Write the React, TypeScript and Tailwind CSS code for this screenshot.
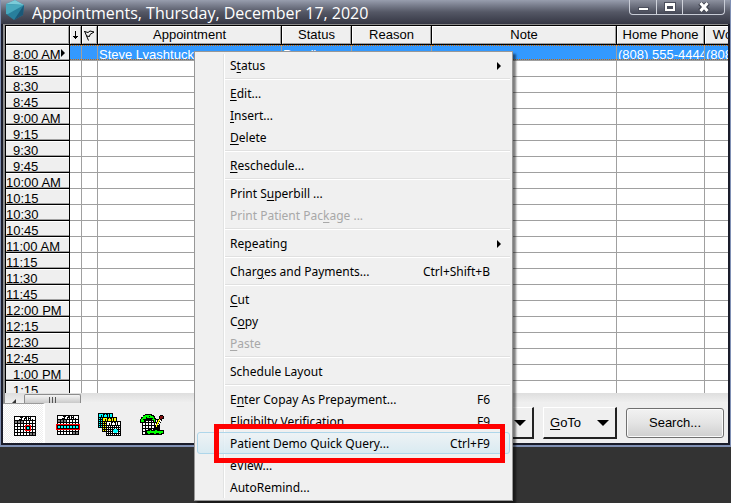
import React from "react";

type MenuItem = {
  // "&" marks the access key, as in a Windows resource file
  label: string;
  shortcut?: string;
  submenu?: boolean;
  disabled?: boolean;
  active?: boolean;
};

const menuGroups: MenuItem[][] = [
  [{ label: "S&tatus", submenu: true }],
  [{ label: "&Edit..." }, { label: "&Insert..." }, { label: "&Delete" }],
  [{ label: "&Reschedule..." }],
  [{ label: "Print S&uperbill ..." }, { label: "Print Patient Pac&kage ...", disabled: true }],
  [{ label: "Re&peating", submenu: true }],
  [{ label: "Char&ges and Payments...", shortcut: "Ctrl+Shift+B" }],
  [{ label: "&Cut" }, { label: "C&opy" }, { label: "&Paste", disabled: true }],
  [{ label: "Schedule Layout" }],
  [
    { label: "E&nter Copay As Prepayment...", shortcut: "F6" },
    { label: "Eligibilty Verification", shortcut: "F9" },
    { label: "Patient Demo Quick Query...", shortcut: "Ctrl+F9", active: true },
    { label: "eView..." },
    { label: "AutoRemind..." },
  ],
];

const times = [
  "8:00 AM", "8:15", "8:30", "8:45",
  "9:00 AM", "9:15", "9:30", "9:45",
  "10:00 AM", "10:15", "10:30", "10:45",
  "11:00 AM", "11:15", "11:30", "11:45",
  "12:00 PM", "12:15", "12:30", "12:45",
  "1:00 PM", "1:15",
];

const columns = ["Appointment", "Status", "Reason", "Note", "Home Phone", "Work Phone"];

const appointments: Record<string, string[]> = {
  "8:00 AM": ["", "", "Steve Lyashtuck", "Pending", "", "", "(808) 555-4444", "(808) 555-1212"],
};

export default function App() {
  return (
    <div className="relative min-h-screen overflow-hidden bg-[#333333] font-['Liberation_Sans',Arial,sans-serif] text-[13px] text-black">
      <main className="border-x border-b-2 border-[#8090b4] bg-[#1a1c2a]">
        <TitleBar />
        <div className="mr-0.5 ml-0.5 border-b-2 border-[#1a1c2a] bg-[#efefef]">
          <div className="border-t border-l-2 border-[#8c8c8c]">
            <ScheduleGrid />
            <div className="flex h-2.5 items-end overflow-hidden bg-gradient-to-b from-[#dedede] to-[#f0f0f0] pl-[7px]">
              <svg viewBox="0 0 4 4" className="mr-2 h-1 w-1" aria-hidden="true">
                <path d="M4 0V4H0Z" fill="#333" />
              </svg>
              <div className="flex h-[9px] w-[57px] items-end justify-center gap-0.5 rounded-t-xs border border-b-0 border-[#8c8c8c] bg-gradient-to-b from-[#f4f4f4] to-[#c9c9c9]">
                <i className="h-1.5 w-px bg-[#555]" />
                <i className="h-1.5 w-px bg-[#555]" />
                <i className="h-1.5 w-px bg-[#555]" />
              </div>
            </div>
          </div>
          <Toolbar />
        </div>
      </main>

      <ContextMenu />
      <div className="pointer-events-none absolute top-[424px] left-[214px] h-[39px] w-[291px] border-5 border-[#ff0000]" />
    </div>
  );
}

function TitleBar() {
  return (
    <header className="flex h-6 items-start bg-gradient-to-b from-[#989eae] via-[#555866] to-[#353744] pl-[5px]">
      <svg viewBox="0 0 18 20" className="h-5 w-[18px] shrink-0">
        <path d="M9 0 18 5 17 15 8 20 0 14 0 4Z" fill="#287f9c" />
        <path d="M9 0 18 5 0 4Z" fill="#7ccbd8" />
        <path d="M0 4 18 5 2 14 0 14Z" fill="#49a8bd" />
        <path d="M18 5 17 15 8 20Z" fill="#1b5878" />
      </svg>
      <h1 className="ml-2 flex-1 truncate font-['Open_Sans','Noto_Sans',sans-serif] text-[16px] leading-[26px] text-white">
        Appointments, Thursday, December 17, 2020
      </h1>
      <div className="mr-[5px] flex h-[15px] shrink-0 divide-x divide-[#d0d3dc] rounded-b-[4px] border border-t-0 border-[#c8ccd6] bg-gradient-to-b from-[#8d919f] to-[#454856]">
        <button type="button" aria-label="Minimize" className="flex w-[27px] items-center justify-center">
          <svg viewBox="0 0 11 10" className="h-2.5 w-[11px]">
            <rect x="0.5" y="5.5" width="10" height="3" fill="#fff" stroke="#4b4e5c" />
          </svg>
        </button>
        <button type="button" aria-label="Maximize" className="flex w-[26px] items-center justify-center">
          <svg viewBox="0 0 12 10" className="h-2.5 w-3">
            <rect x="0.5" y="0.5" width="11" height="9" fill="#fff" stroke="#4b4e5c" />
            <rect x="3" y="4" width="6" height="3" fill="#4b4e5c" />
          </svg>
        </button>
        <button type="button" aria-label="Close" className="flex w-[41px] items-center justify-center">
          <svg viewBox="0 0 12 10" className="h-2.5 w-3">
            <path d="M2 1 10 9M10 1 2 9" stroke="#3c3f4c" strokeWidth="5" />
            <path d="M2.500 1 9.500 9M9.500 1 2.500 9" stroke="#fff" strokeWidth="3" />
          </svg>
        </button>
      </div>
    </header>
  );
}

function ScheduleGrid() {
  return (
    <div className="h-[368px] overflow-hidden border-t border-l border-black bg-white">
      <table className="w-[calc(100%+65px)] table-fixed border-separate border-spacing-0">
        <colgroup>
          <col className="w-16" />
          <col className="w-3" />
          <col className="w-4" />
          <col className="w-[184px]" />
          <col className="w-[70px]" />
          <col className="w-20" />
          <col />
          <col className="w-[88px]" />
          <col className="w-[88px]" />
        </colgroup>
        <thead>
          <tr>
            <HeadCell />
            <HeadCell>
              <svg viewBox="0 0 5 9" className="h-[9px] w-[5px] shrink-0" shapeRendering="crispEdges" aria-label="Order">
                <path d="M2 0h1v5h2v1h-1v1h-1v1h-1v-1h-1v-1h-1v-1h2z" />
              </svg>
            </HeadCell>
            <HeadCell>
              <svg viewBox="0 0 11 11" className="h-[11px] w-[11px] shrink-0" fill="none" stroke="#000" aria-label="Flag">
                <path d="M0.500 1 4.500 10.500M0.500 1.500 4 2.500 6 1 10 2 6 4.500 5.500 6.500 2.500 6" />
              </svg>
            </HeadCell>
            {columns.map((name) => (
              <HeadCell key={name}>{name}</HeadCell>
            ))}
          </tr>
        </thead>
        <tbody>
          {times.map((time) => {
            const cells = appointments[time];
            const oneDigit = time.indexOf(":") === 1;
            return (
              <tr key={time}>
                <th scope="row" className="border-r border-b border-black bg-[#efefef] p-0 text-left font-normal">
                  <div
                    className={`flex h-[15px] overflow-hidden border-t border-b border-t-white border-b-[#a0a0a0] leading-[17px] whitespace-nowrap ${
                      oneDigit ? "pl-[7px]" : ""
                    }`}
                  >
                    {time}
                    {cells ? (
                      <svg viewBox="0 0 4 8" className="mt-[3px] h-2 w-1 shrink-0">
                        <path d="M0 0 4 4 0 8Z" />
                      </svg>
                    ) : null}
                  </div>
                </th>
                {Array.from({ length: 8 }, (_, i) => (
                  <td
                    key={i}
                    className={`border-r border-b p-0 ${
                      cells
                        ? "border-r-[#a0a0a0] border-b-[#a0a0a0] bg-[#3399ff] text-white"
                        : "border-[#a0a0a0]"
                    }`}
                  >
                    <div
                      className={`h-[15px] overflow-hidden pl-px whitespace-nowrap ${
                        cells ? "border-y border-dotted border-[#cc6600] leading-[17px]" : ""
                      }`}
                    >
                      {cells?.[i]}
                    </div>
                  </td>
                ))}
              </tr>
            );
          })}
        </tbody>
      </table>
    </div>
  );
}

function HeadCell({ children }: { children?: React.ReactNode }) {
  return (
    <th scope="col" className="border-r border-b border-black bg-[#efefef] p-0 font-normal">
      <div className="flex h-[18px] items-center justify-center overflow-hidden border border-t-white border-r-[#a0a0a0] border-b-[#a0a0a0] border-l-white whitespace-nowrap">
        {children}
      </div>
    </th>
  );
}

function Toolbar() {
  return (
    <div className="flex h-10 items-center pr-1">
      <div className="flex h-full items-center">
        <button
          type="button"
          aria-label="Day view"
          className="flex h-full w-[42px] items-center justify-center border-t border-r-2 border-t-[#9a9a9a] border-r-white bg-[#f6f6f6] bg-[repeating-conic-gradient(#fff_0_25%,#efefef_0_50%)] bg-[size:2px_2px] pt-[5px] pl-1"
        >
          <svg viewBox="0 0 22 20" className="h-5 w-[22px]" shapeRendering="crispEdges">
            <MonthPage />
            <rect x="11" y="9" width="6" height="6" fill="#ff0000" />
            <rect x="12" y="10" width="4" height="4" fill="#000" />
            <rect x="13" y="11" width="2" height="2" fill="#00ffff" />
          </svg>
        </button>
        <button type="button" aria-label="Week view" className="flex h-full w-[43px] items-center justify-center pt-1 pl-[3px]">
          <svg viewBox="-1 0 24 20" className="h-5 w-6" shapeRendering="crispEdges">
            <MonthPage />
            <rect x="-1" y="9" width="24" height="6" fill="#ff0000" />
            <rect x="0" y="10" width="22" height="4" fill="#000" />
            {range(7).map((c) => (
              <rect key={c} x={1 + c * 3} y="11" width="2" height="2" fill="#00ffff" />
            ))}
          </svg>
        </button>
        <button type="button" aria-label="Multiple months" className="flex h-full w-10 items-center justify-center pt-[3px] pl-[3px]">
          <svg viewBox="0 0 23 23" className="h-[23px] w-[23px]" shapeRendering="crispEdges">
            <SmallPage x={0} y={0} color="#00ffff" />
            <SmallPage x={4} y={4} color="#ffff00" />
            <SmallPage x={8} y={8} color="#ffffff" />
            <path d="M16 16h3v1h1v2h-1v1h-3v-1h-1v-2h1z" fill="#00ffff" />
          </svg>
        </button>
        <button type="button" aria-label="Edit schedule" className="flex h-full w-[46px] items-center justify-center pt-1 pl-0.5">
          <ScheduleEditIcon />
        </button>
      </div>

      <div className="ml-auto flex items-center gap-[9px]">
        <DropButton label="&View" width="w-[90px]" />
        <DropButton label="&GoTo" width="w-[74px]" />
        <button
          type="button"
          className="h-[30px] w-[98px] rounded-[3px] border border-[#707070] bg-gradient-to-b from-[#f2f2f2] via-[#e4e4e4] to-[#cfcfcf] text-center inset-shadow-[0_0_0_1px_#fafafa]"
        >
          Search...
        </button>
      </div>
    </div>
  );
}

function DropButton({ label, width }: { label: string; width: string }) {
  return (
    <button
      type="button"
      className={`flex h-8 items-center justify-between border-t border-r-2 border-b-2 border-l border-t-white border-r-[#222] border-b-[#222] border-l-white bg-[#efefef] pr-1.5 pl-1.5 ${width}`}
    >
      <AccessLabel text={label} />
      <svg viewBox="0 0 12 6" className="h-1.5 w-3">
        <path d="M0 0H12L6 6Z" />
      </svg>
    </button>
  );
}

function ContextMenu() {
  return (
    <div
      role="menu"
      className="absolute top-[51px] left-[194px] w-[319px] border border-[#979797] bg-[#f0f0f0] p-0.5 font-['Noto_Sans','Open_Sans',sans-serif] text-[12px] shadow-[3px_3px_2px_rgba(0,0,0,0.5)]"
    >
      <div className="bg-[linear-gradient(#e2e3e3,#e2e3e3),linear-gradient(#fff,#fff)] bg-[size:1px_100%] bg-[position:26px_0,27px_0] bg-no-repeat">
        {menuGroups.map((group, g) => (
          <React.Fragment key={g}>
            {g > 0 ? (
              <div role="separator" className="ml-7 flex h-1.5 items-center">
                <div className="h-0.5 flex-1 border-t border-b border-t-[#e0e0e0] border-b-white" />
              </div>
            ) : null}
            {group.map((item) => (
              <button
                key={item.label}
                type="button"
                role="menuitem"
                disabled={item.disabled}
                className={`flex h-[22px] w-full items-center rounded-[3px] border pt-0.5 pr-2 pl-8 text-left ${
                  item.active
                    ? "border-[#aed6ea] bg-gradient-to-b from-[#edf3f6]/80 to-[#d4e9f2]/80"
                    : "border-transparent"
                } ${item.disabled ? "text-[#a8a8a8]" : "text-black"}`}
              >
                <span className="flex-1 whitespace-nowrap">
                  <AccessLabel text={item.label} />
                </span>
                {item.shortcut ? <span className="mr-[11px]">{item.shortcut}</span> : null}
                {item.submenu ? (
                  <svg viewBox="0 0 4 8" className="h-2 w-1">
                    <path d="M0 0 4 4 0 8Z" />
                  </svg>
                ) : null}
              </button>
            ))}
          </React.Fragment>
        ))}
      </div>
    </div>
  );
}

function AccessLabel({ text }: { text: string }) {
  const at = text.indexOf("&");
  if (at < 0) return <span>{text}</span>;
  return (
    <span>
      {text.slice(0, at)}
      <u className="underline-offset-2">{text[at + 1]}</u>
      {text.slice(at + 2)}
    </span>
  );
}

function range(n: number) {
  return Array.from({ length: n }, (_, i) => i);
}

// 22x20 month sheet: a white heading strip over a 7x5 grid of day cells
function MonthPage() {
  return (
    <>
      <rect width="22" height="20" fill="#000" />
      <rect x="1" y="1" width="20" height="3" fill="#fff" />
      <path d="M6 1h3v1h-1v2h-3v-1h2v-1h-1zM10 2h1v-1h2v3h-1v-1h-1v1h-1zM14 1h1v1h1v-1h1v3h-1v-1h-1v1h-1zM18 3h1v1h-1z" fill="#000" />
      {range(5).map((r) =>
        range(7).map((c) => {
          const outside = (r === 0 && c < 3) || (r === 4 && c > 4);
          return (
            <rect key={`${r}-${c}`} x={1 + c * 3} y={5 + r * 3} width="2" height="2" fill={outside ? "#808080" : "#fff"} />
          );
        })
      )}
    </>
  );
}

function SmallPage({ x, y, color }: { x: number; y: number; color: string }) {
  return (
    <>
      <rect x={x} y={y} width="15" height="15" fill="#000" />
      <rect x={x + 1} y={y + 1} width="13" height="3" fill={color} />
      <path d={`M${x + 3} ${y + 2}h1v2h-1zM${x + 5} ${y + 1}h2v1h-1v2h-1zM${x + 8} ${y + 1}h2v3h-1v-2h-1zM${x + 11} ${y + 1}h1v3h-1z`} fill="#000" />
      {range(5).map((r) =>
        range(7).map((c) => (
          <rect key={`${r}-${c}`} x={x + 1 + c * 2} y={y + 5 + r * 2} width="1" height="1" fill={color} />
        ))
      )}
    </>
  );
}

function ScheduleEditIcon() {
  return (
    <svg viewBox="0 0 24 22" className="h-[22px] w-6" shapeRendering="crispEdges">
      <rect x="2" y="5" width="18" height="16" fill="#000" />
      {range(5).map((r) =>
        range(5).map((c) => (
          <rect key={`${r}-${c}`} x={3 + c * 3} y={6 + r * 3} width="2" height="2" fill="#fff" />
        ))
      )}
      <path d="M5 0h7v1h2v1h1v2h1v5h-3v-2h-8v2h-5v-4h1v-2h2v-2h2z" fill="#000" />
      <path d="M5 1h6v1h2v1h1v2h1v3h-1v-2h-2v-2h-6v1h-2v3h-3v-3h1v-1h1v-2h2z" fill="#00ff00" />
      <path d="M6 3h1v1h-1zM9 2h1v1h-1zM3 5h1v1h-1zM12 4h1v1h-1z" fill="#000" />
      <path d="M6 16h2v-1h3v1h2v-1h4v1h7v4h-2v1h-15v-1h-1z" fill="#000" />
      <path d="M7 17h3v-1h1v1h4v-1h2v1h6v2h-2v1h-2v-1h-3v1h-2v-1h-4v1h-2v-1h-1z" fill="#00ff00" />
      <path d="M20 1h3v1h1v3h-2v2h-1v2h-1v2h-1v2h-1v2h-3v-4h1v-2h1v-2h1v-2h1v-3h1z" fill="#000" />
      <path d="M19 5h1v2h-1v2h-1v2h-1v2h-1v-3h1v-2h1v-2h1z" fill="#ffff00" />
      <path d="M20 6h1v2h-1v2h-1v1h-1v-1h1v-2h1z" fill="#fff" />
      <path d="M20 2h3v2h-1v1h-2z" fill="#7f1010" />
    </svg>
  );
}
